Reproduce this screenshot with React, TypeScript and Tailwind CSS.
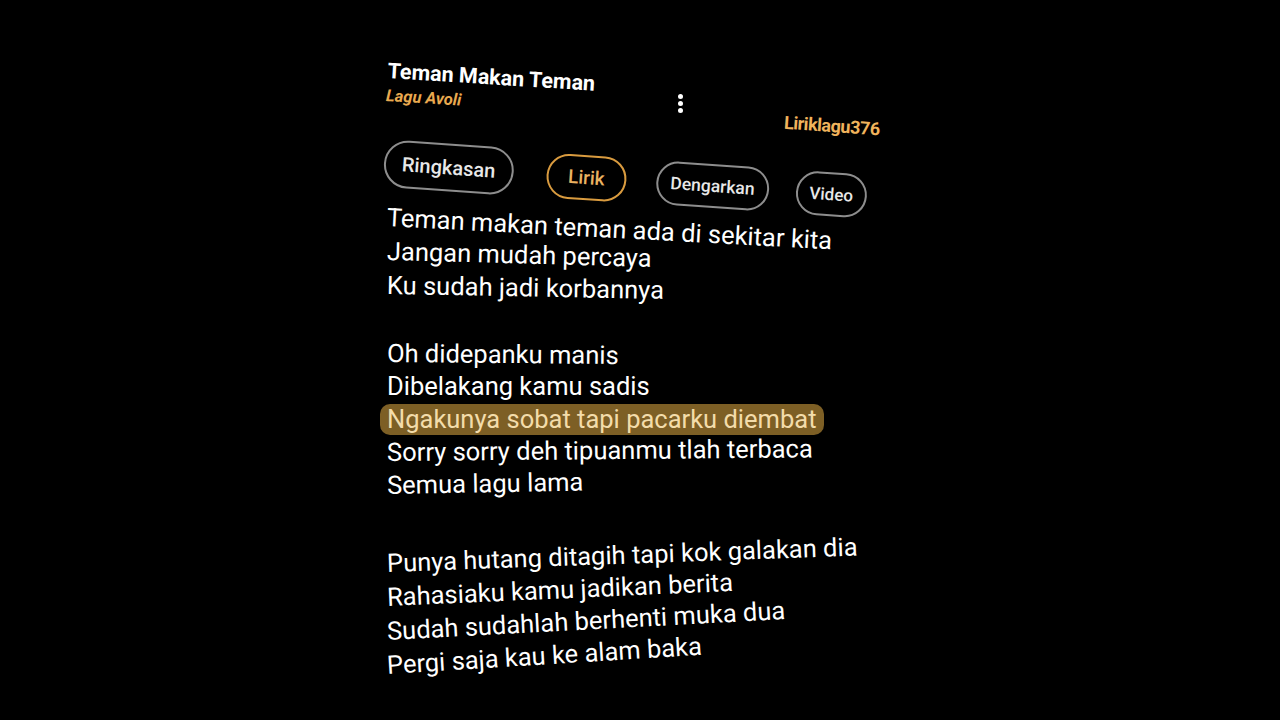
const lyrics: string[][] = [
  [
    'Teman makan teman ada di sekitar kita',
    'Jangan mudah percaya',
    'Ku sudah jadi korbannya',
  ],
  [
    'Oh didepanku manis',
    'Dibelakang kamu sadis',
    'Ngakunya sobat tapi pacarku diembat',
    'Sorry sorry deh tipuanmu tlah terbaca',
    'Semua lagu lama',
  ],
  [
    'Punya hutang ditagih tapi kok galakan dia',
    'Rahasiaku kamu jadikan berita',
    'Sudah sudahlah berhenti muka dua',
    'Pergi saja kau ke alam baka',
  ],
];

const tilts = [
  ['rotate-[3deg]', 'rotate-[1.5deg]', 'rotate-[1deg]'],
  ['rotate-[0.5deg]', 'rotate-0', 'rotate-0', 'rotate-[-0.5deg]', 'rotate-[-1deg]'],
  ['rotate-[-2deg]', 'rotate-[-2.5deg]', 'rotate-[-3deg]', 'rotate-[-3.5deg]'],
];

const HIGHLIGHT = 'Ngakunya sobat tapi pacarku diembat';

export default function App() {
  return (
    <div
      className="w-[1280px] h-[720px] bg-black overflow-hidden text-white"
      style={{ fontFamily: 'Roboto, "Noto Sans", sans-serif' }}
    >
      <div className="ml-[387px] w-[520px] pt-[58px]">
        {/* header */}
        <div className="flex items-start h-[72px]">
          <div className="w-[280px] origin-left rotate-[3.5deg]">
            <div className="text-[21.5px] leading-[26px] font-bold text-white">Teman Makan Teman</div>
            <div className="text-[16.5px] leading-[20px] italic font-bold text-[#e9a94f] mt-[2px]">Lagu Avoli</div>
          </div>
          <div className="ml-[11px] mt-[36px] flex flex-col gap-[2px]">
            <span className="block w-[5px] h-[5px] rounded-full bg-white" />
            <span className="block w-[5px] h-[5px] rounded-full bg-white" />
            <span className="block w-[5px] h-[5px] rounded-full bg-white" />
          </div>
          <div className="ml-[101px] mt-[54px] text-[18px] font-bold text-[#f0b35c] rotate-[4deg] tracking-tight">
            Liriklagu376
          </div>
        </div>

        {/* tabs */}
        <div className="flex items-center origin-left rotate-[4deg] mt-[9px] -ml-[3px]">
          <div className="px-[16px] py-[10px] rounded-full border-2 border-[#8d8d8d] text-[#e8e8e8] text-[20px] leading-[24px] font-medium">
            Ringkasan
          </div>
          <div className="ml-[33px] px-[20px] py-[9px] rounded-full border-2 border-[#d99b3f] text-[#eab261] text-[19px] leading-[23px] font-medium">
            Lirik
          </div>
          <div className="ml-[30px] px-[12px] py-[9px] rounded-full border-2 border-[#8d8d8d] text-[#e8e8e8] text-[17.5px] leading-[22px] font-medium">
            Dengarkan
          </div>
          <div className="ml-[27px] px-[12px] py-[9px] rounded-full border-2 border-[#8d8d8d] text-[#e8e8e8] text-[17px] leading-[22px] font-medium">
            Video
          </div>
        </div>

        {/* lyrics */}
        <div className="mt-[13px] flex flex-col">
          {lyrics.map((stanza, i) => (
            <div
              key={i}
              className={
                i === 0 ? 'flex flex-col' : i === 1 ? 'flex flex-col mt-[35px]' : 'flex flex-col mt-[44px]'
              }
            >
              {stanza.map((line, j) =>
                line === HIGHLIGHT ? (
                  <div key={j} className="self-start -ml-[7px] px-[7px] rounded-[10px] bg-[#7d5f25] text-[#f3dcaa] text-[25.5px] leading-[31px] my-[1px]">
                    {line}
                  </div>
                ) : (
                  <div
                    key={j}
                    className={
                      'self-start origin-left text-[25.5px] text-white ' +
                      (i === 1 ? 'leading-[33px] ' : 'leading-[34px] ') +
                      tilts[i][j]
                    }
                  >
                    {line}
                  </div>
                )
              )}
            </div>
          ))}
        </div>
      </div>
    </div>
  );
}
